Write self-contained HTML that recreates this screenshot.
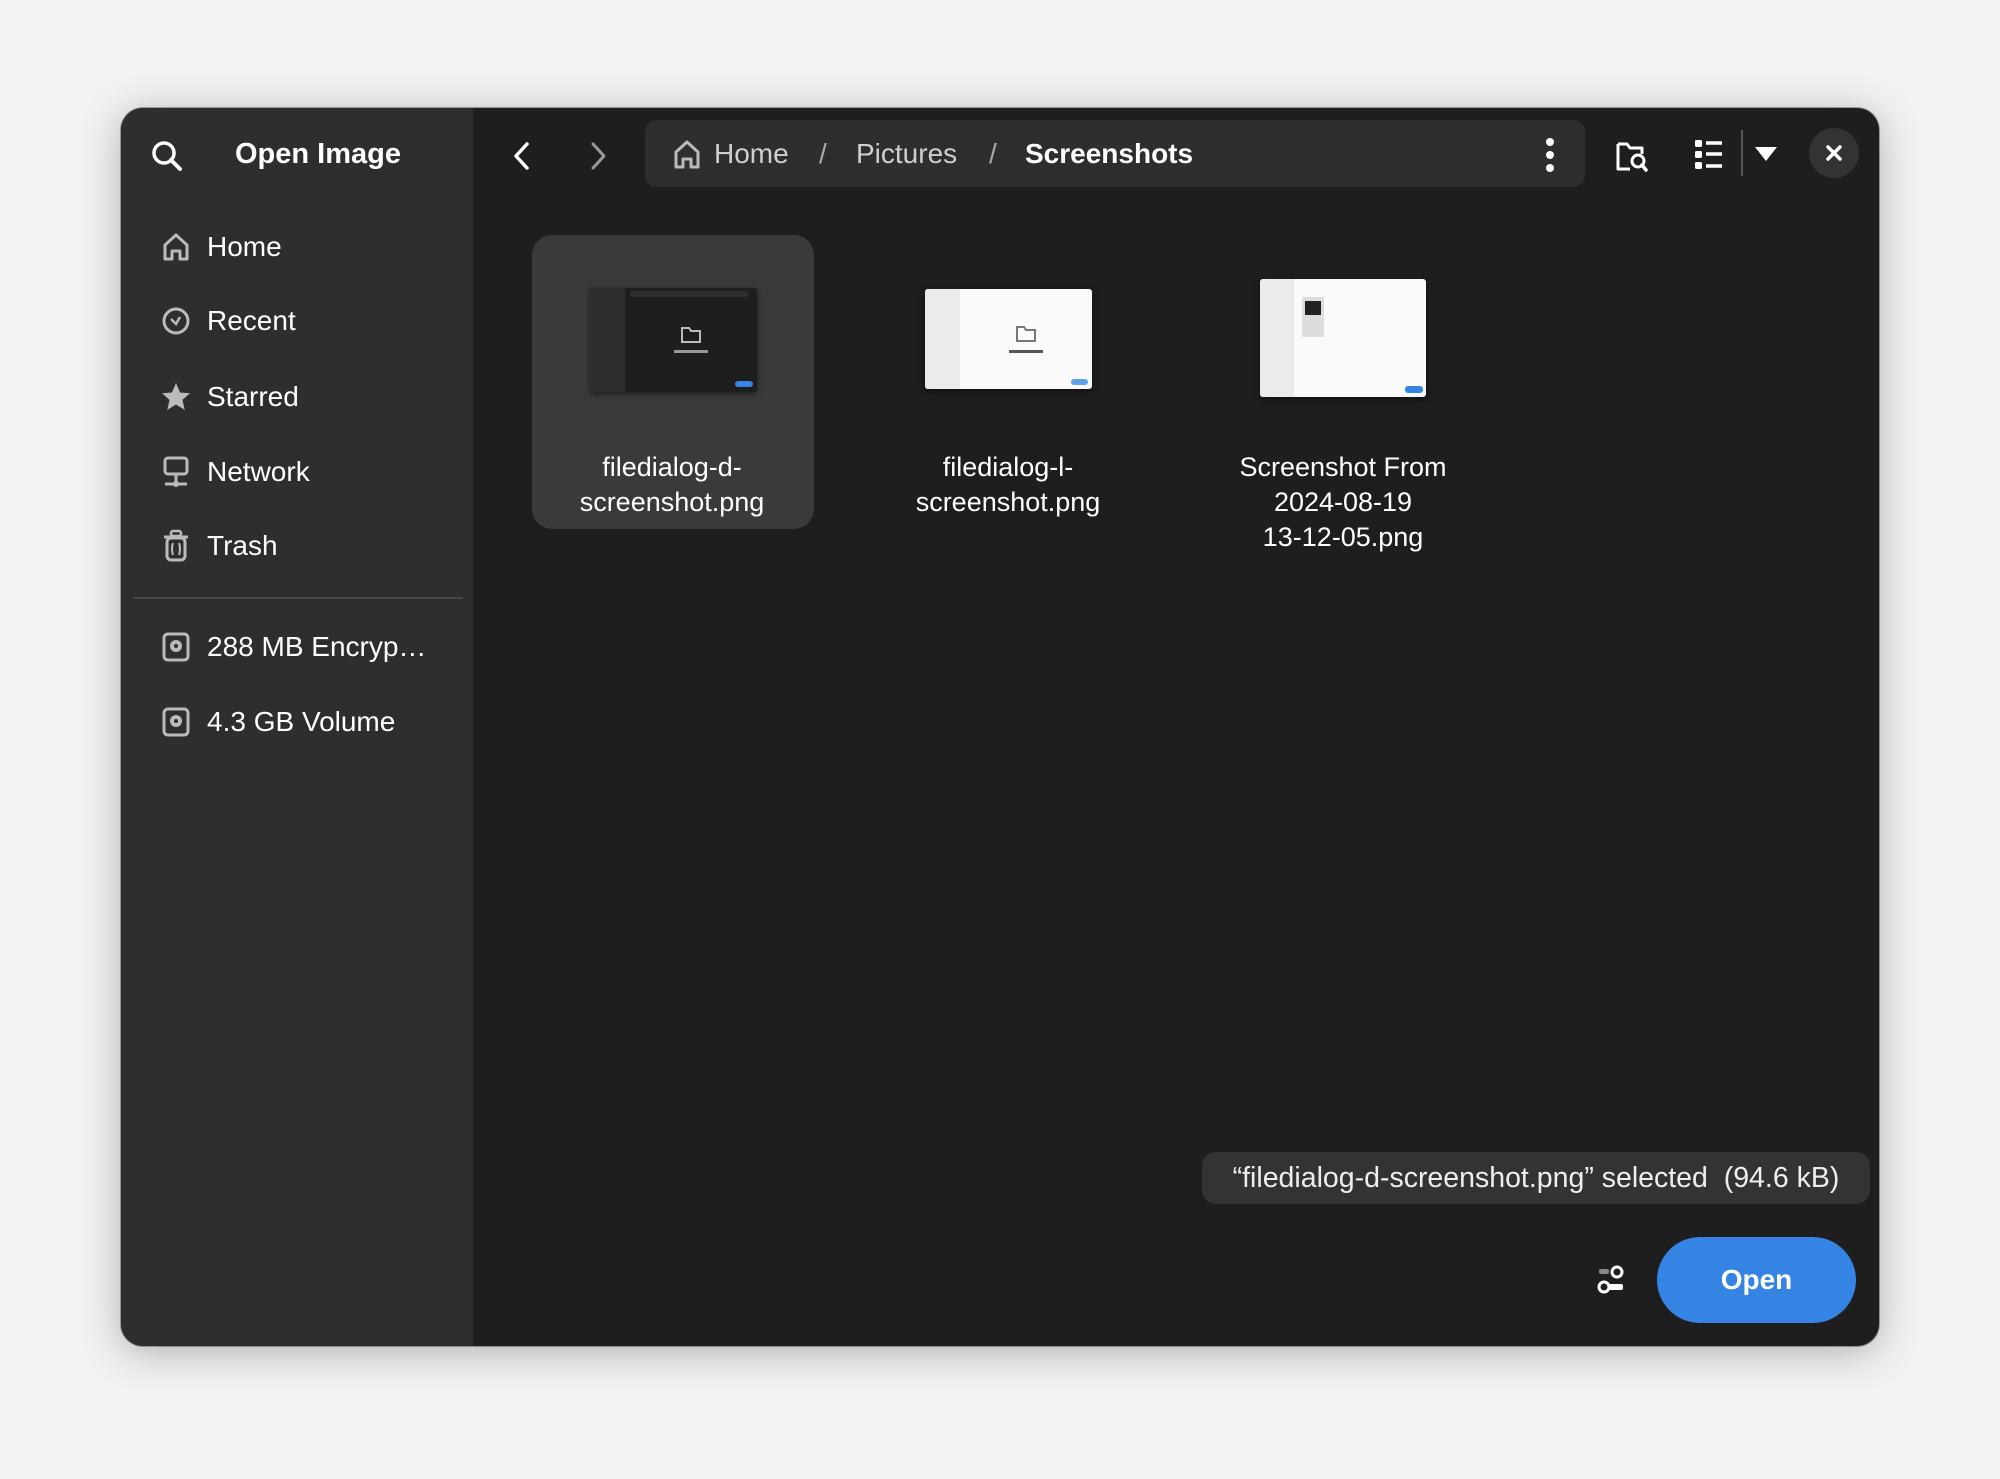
<!DOCTYPE html>
<html><head><meta charset="utf-8"><style>
*{margin:0;padding:0;box-sizing:border-box}
body{width:2000px;height:1479px;background:#f2f2f2;font-family:"Liberation Sans",sans-serif;position:relative;overflow:hidden}
.win{position:absolute;left:121px;top:108px;width:1758px;height:1238px;border-radius:22px;background:#1e1e1e;overflow:hidden;box-shadow:0 6px 40px rgba(0,0,0,.28),0 0 0 1px rgba(0,0,0,.3)}
.side{position:absolute;left:0;top:0;width:352px;height:100%;background:#2e2e2e}
.a{position:absolute;color:#fff;white-space:nowrap}
.t{font-size:28px;line-height:34px}
svg{position:absolute;overflow:visible}
.tile{position:absolute;left:411px;top:127px;width:282px;height:294px;border-radius:20px;background:#3a3a3a}
.lbl{position:absolute;width:300px;text-align:center;color:#fff;font-size:27px;line-height:35px}
.thumb{position:absolute;border-radius:3px;overflow:hidden;box-shadow:0 2px 6px rgba(0,0,0,.5)}
</style></head><body>
<div class="win">
 <div class="side"></div>
 <svg style="left:29px;top:31px" width="34" height="34" viewBox="0 0 34 34"><circle cx="14" cy="14" r="10" fill="none" stroke="#fff" stroke-width="3.5"/><path d="M21 21l9 9" stroke="#fff" stroke-width="4" stroke-linecap="round"/></svg>
 <div class="a" style="left:114px;top:28px;font-size:29px;font-weight:bold;line-height:36px">Open Image</div>
 <svg style="left:40px;top:124px" width="30" height="30" viewBox="0 0 30 30"><path d="M4 13L15 3l11 10v14h-7v-8h-8v8H4z" fill="none" stroke="#bbb" stroke-width="3" stroke-linejoin="round"/></svg>
 <div class="a t" style="left:86px;top:122px">Home</div>
 <svg style="left:40px;top:198px" width="30" height="30" viewBox="0 0 30 30"><circle cx="15" cy="15" r="12" fill="none" stroke="#bbb" stroke-width="3"/><path d="M10 13l5 5 4-7" fill="none" stroke="#bbb" stroke-width="2.5"/></svg>
 <div class="a t" style="left:86px;top:196px">Recent</div>
 <svg style="left:39px;top:273px" width="32" height="32" viewBox="0 0 32 32"><path d="M16 2l4 9.5 10 .8-7.6 6.6 2.4 10L16 23.5 7.2 29l2.4-10L2 12.3l10-.8z" fill="#bbb"/></svg>
 <div class="a t" style="left:86px;top:272px">Starred</div>
 <svg style="left:41px;top:348px" width="28" height="32" viewBox="0 0 28 32"><rect x="3" y="2" width="22" height="16" rx="3" fill="none" stroke="#bbb" stroke-width="3"/><path d="M14 18v8M3 28h22" stroke="#bbb" stroke-width="3"/><circle cx="14" cy="28" r="3" fill="#bbb"/></svg>
 <div class="a t" style="left:86px;top:347px">Network</div>
 <svg style="left:41px;top:422px" width="28" height="32" viewBox="0 0 28 32"><rect x="9" y="1" width="10" height="5" rx="2" fill="none" stroke="#bbb" stroke-width="2.5"/><path d="M2 7h24" stroke="#bbb" stroke-width="3"/><rect x="5" y="8" width="18" height="22" rx="4" fill="none" stroke="#bbb" stroke-width="3"/><path d="M11 13q-2 6 0 12M17 13q2 6 0 12" fill="none" stroke="#bbb" stroke-width="2"/></svg>
 <div class="a t" style="left:86px;top:421px">Trash</div>
 <div style="position:absolute;left:12px;top:489px;width:330px;height:2px;background:#474747"></div>
 <svg style="left:41px;top:524px" width="28" height="30" viewBox="0 0 28 30"><rect x="2" y="2" width="24" height="26" rx="4" fill="none" stroke="#bbb" stroke-width="3"/><circle cx="14" cy="14" r="6" fill="#bbb"/><circle cx="14" cy="14" r="2" fill="#2e2e2e"/></svg>
 <div class="a t" style="left:86px;top:522px">288 MB Encryp…</div>
 <svg style="left:41px;top:599px" width="28" height="30" viewBox="0 0 28 30"><rect x="2" y="2" width="24" height="26" rx="4" fill="none" stroke="#bbb" stroke-width="3"/><circle cx="14" cy="14" r="6" fill="#bbb"/><circle cx="14" cy="14" r="2" fill="#2e2e2e"/></svg>
 <div class="a t" style="left:86px;top:597px">4.3 GB Volume</div>
 <svg style="left:390px;top:33px" width="22" height="30" viewBox="0 0 22 30"><path d="M16 3L5 15l11 12" fill="none" stroke="#fff" stroke-width="3.5" stroke-linecap="round" stroke-linejoin="round"/></svg>
 <svg style="left:466px;top:33px" width="22" height="30" viewBox="0 0 22 30"><path d="M6 3l11 12L6 27" fill="none" stroke="#999" stroke-width="3" stroke-linecap="round" stroke-linejoin="round"/></svg>
 <div style="position:absolute;left:524px;top:12px;width:940px;height:67px;border-radius:12px;background:#2e2e2e"></div>
 <svg style="left:551px;top:30px" width="30" height="32" viewBox="0 0 30 32"><path d="M4 14L15 4l11 10v15h-7v-8h-8v8H4z" fill="none" stroke="#bbb" stroke-width="3" stroke-linejoin="round"/></svg>
 <div class="a t" style="left:593px;top:29px;color:#cfcfcf">Home</div>
 <div class="a t" style="left:698px;top:29px;color:#aaa">/</div>
 <div class="a t" style="left:735px;top:29px;color:#cfcfcf">Pictures</div>
 <div class="a t" style="left:868px;top:29px;color:#aaa">/</div>
 <div class="a t" style="left:904px;top:29px;font-weight:bold">Screenshots</div>
 <svg style="left:1424px;top:30px" width="10" height="34" viewBox="0 0 10 34"><circle cx="5" cy="4" r="4" fill="#fff"/><circle cx="5" cy="17" r="4" fill="#fff"/><circle cx="5" cy="30" r="4" fill="#fff"/></svg>
 <svg style="left:1493px;top:30px" width="36" height="36" viewBox="0 0 36 36"><path d="M4 6h9l3 4h12v6M16 31H4V6" fill="none" stroke="#fff" stroke-width="3" stroke-linejoin="round"/><circle cx="24" cy="23" r="6" fill="none" stroke="#fff" stroke-width="3"/><path d="M28 27l4 5" stroke="#fff" stroke-width="3.5" stroke-linecap="round"/></svg>
 <svg style="left:1573px;top:31px" width="30" height="32" viewBox="0 0 30 32"><rect x="1" y="1" width="7" height="7" rx="1.5" fill="#fff"/><rect x="1" y="12" width="7" height="7" rx="1.5" fill="#fff"/><rect x="1" y="23" width="7" height="7" rx="1.5" fill="#fff"/><path d="M12 4h16M12 15h16M12 27h16" stroke="#fff" stroke-width="3.5"/></svg>
 <div style="position:absolute;left:1620px;top:22px;width:1.5px;height:46px;background:#555"></div>
 <svg style="left:1633px;top:38px" width="24" height="16" viewBox="0 0 24 16"><path d="M1 1h22L12 15z" fill="#fff"/></svg>
 <div style="position:absolute;left:1688px;top:20px;width:50px;height:50px;border-radius:50%;background:#333"></div>
 <svg style="left:1704px;top:36px" width="18" height="18" viewBox="0 0 18 18"><path d="M3 3l12 12M15 3L3 15" stroke="#fff" stroke-width="3.5" stroke-linecap="round"/></svg>
 <div class="tile"></div>
 <div class="thumb" style="left:469px;top:180px;width:167px;height:104px;background:#1e1e1e">
  <div style="position:absolute;left:0;top:0;width:35px;height:104px;background:#2e2e2e"></div>
  <div style="position:absolute;left:40px;top:3px;width:118px;height:6px;background:#2e2e2e;border-radius:2px"></div>
  <svg style="left:90px;top:38px" width="22" height="18" viewBox="0 0 22 18"><path d="M2 2h7l2 3h9v11H2z" fill="none" stroke="#bbb" stroke-width="2"/></svg>
  <div style="position:absolute;left:84px;top:62px;width:34px;height:3px;background:#999"></div>
  <div style="position:absolute;left:145px;top:93px;width:18px;height:6px;border-radius:3px;background:#3584e4"></div>
 </div>
 <div class="thumb" style="left:804px;top:181px;width:167px;height:100px;background:#fafafa">
  <div style="position:absolute;left:0;top:0;width:35px;height:100px;background:#ebebeb"></div>
  <svg style="left:90px;top:36px" width="22" height="18" viewBox="0 0 22 18"><path d="M2 2h7l2 3h9v11H2z" fill="none" stroke="#777" stroke-width="2"/></svg>
  <div style="position:absolute;left:84px;top:61px;width:34px;height:3px;background:#555"></div>
  <div style="position:absolute;left:146px;top:90px;width:17px;height:6px;border-radius:3px;background:#62a0ea"></div>
 </div>
 <div class="thumb" style="left:1139px;top:171px;width:166px;height:118px;background:#fafafa">
  <div style="position:absolute;left:0;top:0;width:34px;height:118px;background:#ebebeb"></div>
  <div style="position:absolute;left:42px;top:18px;width:22px;height:40px;background:#ddd"></div>
  <div style="position:absolute;left:45px;top:22px;width:16px;height:14px;background:#222"></div>
  <div style="position:absolute;left:145px;top:107px;width:18px;height:7px;border-radius:3px;background:#3584e4"></div>
 </div>
 <div class="lbl" style="left:401px;top:342px">filedialog-d-<br>screenshot.png</div>
 <div class="lbl" style="left:737px;top:342px">filedialog-l-<br>screenshot.png</div>
 <div class="lbl" style="left:1072px;top:342px">Screenshot From<br>2024-08-19<br>13-12-05.png</div>
 <div style="position:absolute;left:1081px;top:1044px;width:668px;height:52px;border-radius:14px;background:#333"></div>
 <div class="a" style="left:1081px;top:1053px;width:668px;text-align:center;font-size:28.5px;line-height:34px;color:#eee">“filedialog-d-screenshot.png” selected &nbsp;(94.6 kB)</div>
 <svg style="left:1476px;top:1157px" width="28" height="30" viewBox="0 0 28 30"><rect x="2" y="4" width="10" height="5" rx="2" fill="#888"/><circle cx="20" cy="7" r="5" fill="none" stroke="#fff" stroke-width="3"/><circle cx="7" cy="22" r="5" fill="none" stroke="#fff" stroke-width="3"/><rect x="12" y="19" width="14" height="6" rx="2" fill="#fff"/></svg>
 <div style="position:absolute;left:1536px;top:1129px;width:199px;height:86px;border-radius:43px;background:#3584e4"></div>
 <div class="a" style="left:1536px;top:1155px;width:199px;text-align:center;font-size:28px;line-height:34px;font-weight:bold">Open</div>
</div>
</body></html>
